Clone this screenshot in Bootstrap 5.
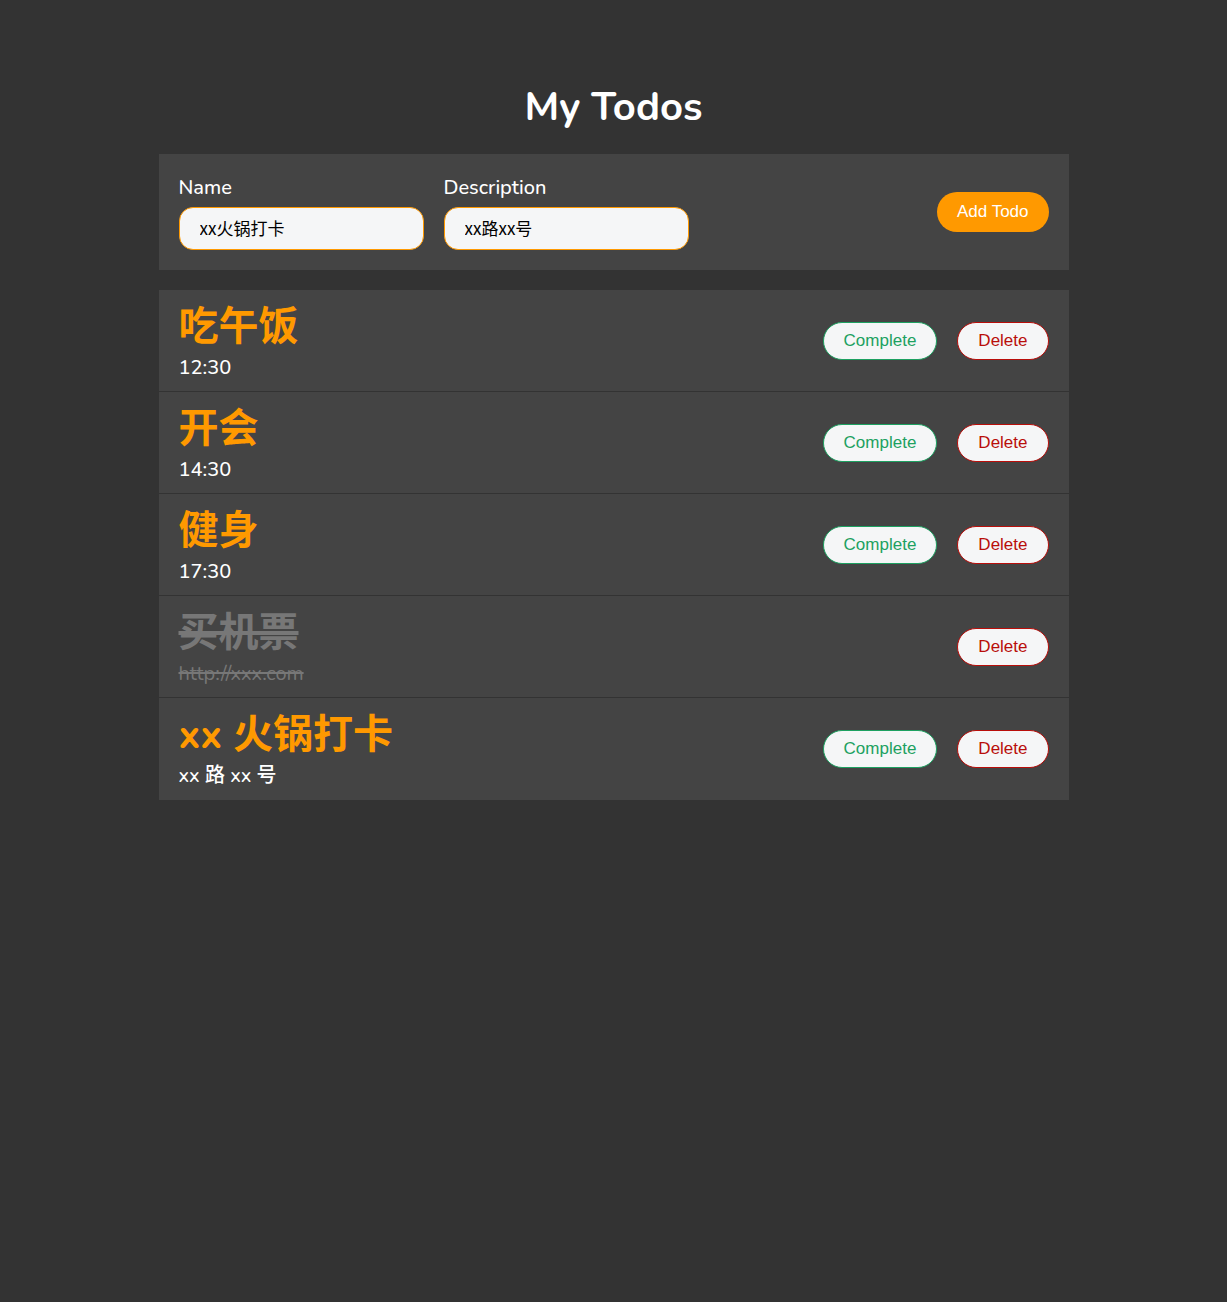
<!DOCTYPE html>
<html lang="zh-CN">
<head>
<meta charset="utf-8">
<meta name="viewport" content="width=device-width, initial-scale=1">
<title>My Todos</title>
<link href="https://cdn.jsdelivr.net/npm/bootstrap@5.3.0/dist/css/bootstrap.min.css" rel="stylesheet">
<style>
  body {
    background: #333;
    color: #fff;
    font-family: Nunito, Lato, "Noto Sans CJK SC", sans-serif;
    font-size: 20px;
    line-height: 27px;
  }
  .todo-app { max-width: 910px; padding-top: 80px; }
  .todo-title { font-size: 40px; line-height: 54px; font-weight: 700; margin-bottom: 20px; }
  .panel { background: #444; }
  .todo-form { padding: 20px; margin-bottom: 20px; }
  .form-fields { gap: 20px; }
  .todo-field { width: 245px; }
  .todo-field label { margin-bottom: 6px; font-weight: 500; }
  .todo-input, .todo-input:focus {
    height: 43px;
    padding: 8px 20px 10px;
    border: 1px solid #f90;
    border-radius: 14px;
    background: #f5f6f7;
    color: #000;
    font: 17px/23px "Noto Sans CJK SC", sans-serif;
  }
  .pill {
    --bs-btn-padding-x: 20px;
    --bs-btn-padding-y: 9px;
    --bs-btn-font-size: 17px;
    --bs-btn-line-height: 18px;
    --bs-btn-font-family: "Liberation Sans", Arial, sans-serif;
    --bs-btn-border-radius: 20px;
    --bs-btn-bg: #f5f6f7;
    --bs-btn-hover-bg: #fff;
  }
  .pill-add {
    --bs-btn-padding-y: 11px;
    --bs-btn-border-width: 0;
    --bs-btn-bg: #f90;
    --bs-btn-color: #fff;
    --bs-btn-hover-bg: #e68a00;
    --bs-btn-hover-color: #fff;
  }
  .pill-complete { --bs-btn-color: #1da161; --bs-btn-border-color: #1da161; --bs-btn-hover-color: #1da161; --bs-btn-hover-border-color: #1da161; }
  .pill-delete { --bs-btn-color: #b90e0a; --bs-btn-border-color: #b90e0a; --bs-btn-hover-color: #b90e0a; --bs-btn-hover-border-color: #b90e0a; }
  .todo-item { padding: 10px 20px; border-bottom: 1px solid #333; }
  .todo-item:last-child { border-bottom-color: #444; }
  .todo-item h2 { font-size: 40px; line-height: 54px; font-weight: 700; color: #f90; margin: 0; }
  .todo-item p { font-weight: 500; }
  .todo-actions { gap: 20px; }
  .done h2, .done p { color: #777; text-decoration: line-through; }
  .done p { font-weight: 400; }
</style>
</head>
<body>
<main class="todo-app container-fluid px-0">
  <h1 class="todo-title text-center">My Todos</h1>
  <form class="todo-form panel d-flex flex-wrap align-items-center justify-content-between">
    <div class="form-fields d-flex flex-wrap">
      <div class="todo-field">
        <label class="d-block" for="name">Name</label>
        <input class="form-control todo-input" type="text" id="name" value="xx火锅打卡">
      </div>
      <div class="todo-field">
        <label class="d-block" for="description">Description</label>
        <input class="form-control todo-input" type="text" id="description" value="xx路xx号">
      </div>
    </div>
    <button class="btn pill pill-add" type="button">Add Todo</button>
  </form>
  <ul class="list-unstyled mb-0">
    <li class="todo-item panel d-flex align-items-center justify-content-between">
      <div><h2>吃午饭</h2><p class="mb-0">12:30</p></div>
      <div class="todo-actions d-flex">
        <button class="btn pill pill-complete" type="button">Complete</button>
        <button class="btn pill pill-delete" type="button">Delete</button>
      </div>
    </li>
    <li class="todo-item panel d-flex align-items-center justify-content-between">
      <div><h2>开会</h2><p class="mb-0">14:30</p></div>
      <div class="todo-actions d-flex">
        <button class="btn pill pill-complete" type="button">Complete</button>
        <button class="btn pill pill-delete" type="button">Delete</button>
      </div>
    </li>
    <li class="todo-item panel d-flex align-items-center justify-content-between">
      <div><h2>健身</h2><p class="mb-0">17:30</p></div>
      <div class="todo-actions d-flex">
        <button class="btn pill pill-complete" type="button">Complete</button>
        <button class="btn pill pill-delete" type="button">Delete</button>
      </div>
    </li>
    <li class="todo-item done panel d-flex align-items-center justify-content-between">
      <div><h2>买机票</h2><p class="mb-0">http://xxx.com</p></div>
      <div class="todo-actions d-flex">
        <button class="btn pill pill-delete" type="button">Delete</button>
      </div>
    </li>
    <li class="todo-item panel d-flex align-items-center justify-content-between">
      <div><h2>xx 火锅打卡</h2><p class="mb-0">xx 路 xx 号</p></div>
      <div class="todo-actions d-flex">
        <button class="btn pill pill-complete" type="button">Complete</button>
        <button class="btn pill pill-delete" type="button">Delete</button>
      </div>
    </li>
  </ul>
</main>
<script src="https://cdn.jsdelivr.net/npm/bootstrap@5.3.0/dist/js/bootstrap.bundle.min.js"></script>
</body>
</html>
